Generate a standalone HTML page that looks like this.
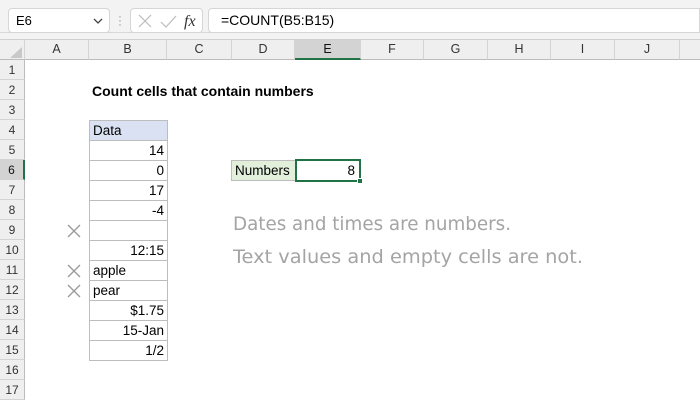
<!DOCTYPE html>
<html><head><meta charset="utf-8"><style>
*{margin:0;padding:0;box-sizing:border-box}
body{width:700px;height:400px;overflow:hidden;background:#fff;font-family:"Liberation Sans",sans-serif;position:relative;font-size:13px;color:#000}
.a{position:absolute}
.ch{position:absolute;top:40px;height:20px;line-height:19px;text-align:center;color:#333;font-size:12.5px;border-right:1px solid #d4d4d4;border-bottom:1px solid #bcbcbc;background:#efefef}
.rh{position:absolute;left:0;width:25px;height:20px;line-height:20px;text-align:center;color:#333;font-size:12px;background:#efefef;border-bottom:1px solid #d4d4d4;border-right:1px solid #bcbcbc}
.c{position:absolute;left:89px;width:79px;height:21px;border:1px solid #bdbdbd;line-height:19px;padding:0 3px;font-size:13.5px}
.r{text-align:right}
.x{position:absolute;left:67px}
</style></head><body>
<div class="a" style="left:0;top:0;width:700px;height:40px;background:#f3f3f3;border-bottom:1px solid #d0d0d0"></div>
<div class="a" style="left:0;top:32px;width:700px;height:1px;background:#d8d8d8"></div>
<div class="a" style="left:8px;top:8px;width:102px;height:25px;background:#fff;border:1px solid #d6d6d6;border-radius:4px;line-height:23px;padding-left:7px;font-size:13px">E6</div>
<svg class="a" style="left:92px;top:16px" width="12" height="10"><path d="M2 3 L6 7 L10 3" stroke="#444" stroke-width="1.3" fill="none"/></svg>
<div class="a" style="left:118px;top:14px;color:#999;font-size:12px;line-height:4px">·<br>·<br>·</div>
<div class="a" style="left:130px;top:8px;width:73px;height:25px;background:#fff;border:1px solid #d6d6d6;border-radius:4px"></div>
<svg class="a" style="left:136px;top:12px" width="66" height="18"><path d="M3 3 L15 15 M15 3 L3 15" stroke="#bbb" stroke-width="1.2"/><path d="M25 10 L30 15 L40 4" stroke="#bbb" stroke-width="1.2" fill="none"/><text x="48" y="14" font-family="Liberation Serif" font-style="italic" font-size="16" fill="#333">fx</text></svg>
<div class="a" style="left:208px;top:8px;width:492px;height:25px;background:#fff;border:1px solid #d6d6d6;border-radius:4px 0 0 4px;line-height:23px;padding-left:12px;font-size:14px">=COUNT(B5:B15)</div>
<div class="ch" style="left:0;width:25px"></div>
<svg class="a" style="left:8px;top:46px" width="15" height="13"><path d="M14 1 L14 12 L2 12 Z" fill="#c8c8c8"/></svg>
<div class="ch" style="left:25px;width:64px">A</div>
<div class="ch" style="left:89px;width:78px">B</div>
<div class="ch" style="left:167px;width:65px">C</div>
<div class="ch" style="left:232px;width:63px">D</div>
<div class="ch" style="left:295px;width:66px;background:#d3d3d3;border-bottom:2px solid #217346;color:#111">E</div>
<div class="ch" style="left:361px;width:63px">F</div>
<div class="ch" style="left:424px;width:64px">G</div>
<div class="ch" style="left:488px;width:63px">H</div>
<div class="ch" style="left:551px;width:64px">I</div>
<div class="ch" style="left:615px;width:65px">J</div>
<div class="ch" style="left:680px;width:30px"></div>
<div class="rh" style="top:60px">1</div><div class="rh" style="top:80px">2</div><div class="rh" style="top:100px">3</div><div class="rh" style="top:120px">4</div><div class="rh" style="top:140px">5</div>
<div class="rh" style="top:160px;background:#d3d3d3;border-right:2px solid #217346;color:#111">6</div>
<div class="rh" style="top:180px">7</div><div class="rh" style="top:200px">8</div><div class="rh" style="top:220px">9</div><div class="rh" style="top:240px">10</div><div class="rh" style="top:260px">11</div><div class="rh" style="top:280px">12</div><div class="rh" style="top:300px">13</div><div class="rh" style="top:320px">14</div><div class="rh" style="top:340px">15</div><div class="rh" style="top:360px">16</div><div class="rh" style="top:380px">17</div>
<div class="a" style="left:92px;top:81px;font-weight:bold;font-size:14px;line-height:20px">Count cells that contain numbers</div>
<div class="c" style="top:120px;background:#d9e1f2">Data</div>
<div class="c r" style="top:140px">14</div>
<div class="c r" style="top:160px">0</div>
<div class="c r" style="top:180px">17</div>
<div class="c r" style="top:200px">-4</div>
<div class="c r" style="top:220px"></div>
<div class="c r" style="top:240px">12:15</div>
<div class="c" style="top:260px">apple</div>
<div class="c" style="top:280px">pear</div>
<div class="c r" style="top:300px">$1.75</div>
<div class="c r" style="top:320px">15-Jan</div>
<div class="c r" style="top:340px">1/2</div>
<svg class="x" style="top:224px" width="14" height="14"><path d="M1 1 L13 13 M13 1 L1 13" stroke="#999" stroke-width="1.3"/></svg>
<svg class="x" style="top:264px" width="14" height="14"><path d="M1 1 L13 13 M13 1 L1 13" stroke="#999" stroke-width="1.3"/></svg>
<svg class="x" style="top:284px" width="14" height="14"><path d="M1 1 L13 13 M13 1 L1 13" stroke="#999" stroke-width="1.3"/></svg>
<div class="a" style="left:231px;top:160px;width:65px;height:21px;background:#e2efda;border:1px solid #bdbdbd;line-height:19px;padding-left:3px;font-size:13.5px">Numbers</div>
<div class="a" style="left:295px;top:159px;width:66px;height:23px;border:2px solid #217346;line-height:19px;text-align:right;padding-right:4px;font-size:13.5px">8</div>
<div class="a" style="left:357px;top:178px;width:6px;height:6px;background:#217346;border:1px solid #fff"></div>
<svg class="a" style="left:0;top:0" width="700" height="400"><text x="233" y="230" font-family="DejaVu Sans" font-size="19" fill="#a4a4a4" textLength="278" lengthAdjust="spacingAndGlyphs">Dates and times are numbers.</text><text x="233" y="263" font-family="DejaVu Sans" font-size="19" fill="#a4a4a4" textLength="350" lengthAdjust="spacingAndGlyphs">Text values and empty cells are not.</text></svg>
</body></html>
